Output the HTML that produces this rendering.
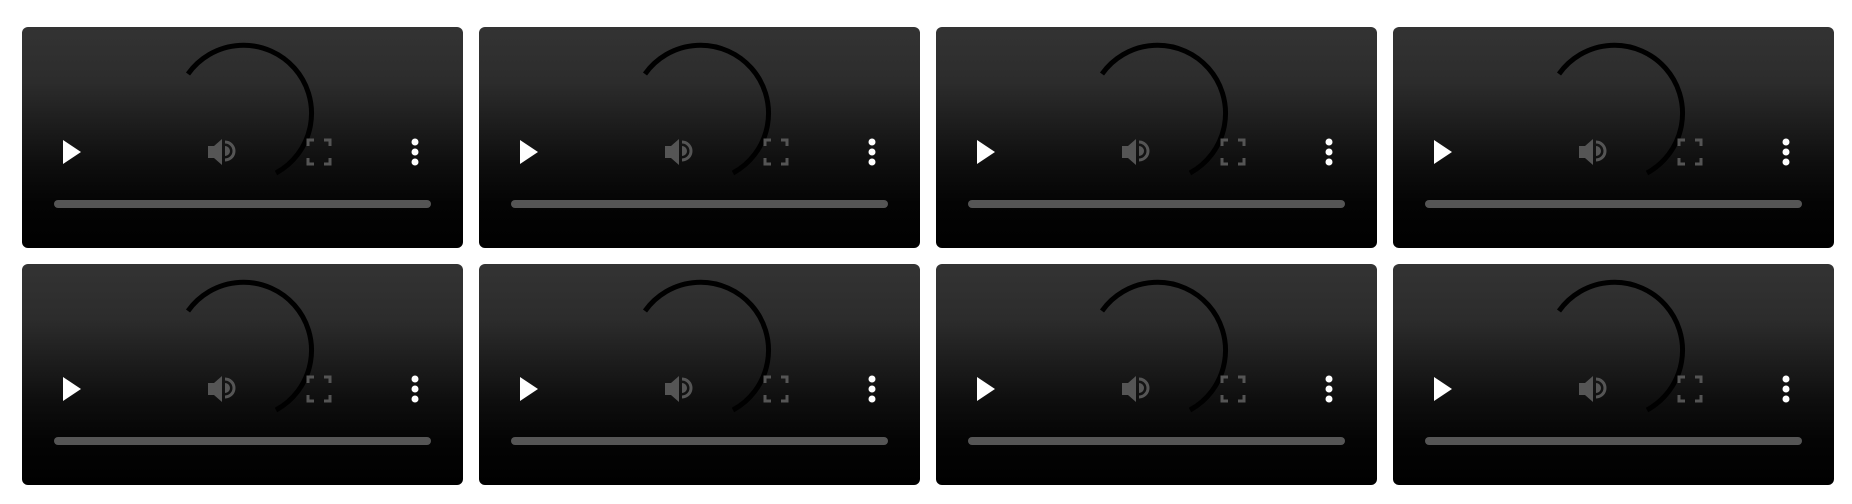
<!DOCTYPE html>
<html><head><style>
html,body{margin:0;padding:0;background:#fff;width:1852px;height:504px;overflow:hidden}
.c{position:absolute;width:441px;height:221px;border-radius:6px;background:linear-gradient(#333 0%,#2c2c2c 25%,#1c1c1c 45%,#0e0e0e 62%,#040404 80%,#000 100%);overflow:hidden}
.c svg{position:absolute;left:0;top:0}
</style></head><body>
<div id="w"></div>
<script>
var xs=[22,479,936,1393],ys=[27,264],h='';
var svg='<svg width="441" height="221" viewBox="0 0 441 221">'+
'<path d="M166 47 A68 68 0 1 1 254 146" fill="none" stroke="#000" stroke-width="5"/>'+
'<polygon points="41,113 59,125 41,137" fill="#fff"/>'+
'<g transform="translate(0,-2)">'+
'<path d="M186 121 h6 l8 -7 v26 l-8 -7 h-6z" fill="#555"/>'+
'<path d="M203 117 a9 9 0 0 1 0 18" fill="none" stroke="#555" stroke-width="3"/>'+
'<path d="M203 121 a5 5 0 0 1 0 10z" fill="#555"/>'+
'<path d="M286 121v-6h6M302 115h6v6M308 133v6h-6M292 139h-6v-6" fill="none" stroke="#555" stroke-width="3"/>'+
'</g>'+
'<circle cx="393" cy="115" r="3.5" fill="#fff"/><circle cx="393" cy="125" r="3.5" fill="#fff"/><circle cx="393" cy="135" r="3.5" fill="#fff"/>'+
'<rect x="32" y="173" width="377" height="8" rx="4" fill="#555"/></svg>';
ys.forEach(function(y){xs.forEach(function(x){h+='<div class="c" style="left:'+x+'px;top:'+y+'px">'+svg+'</div>';});});
document.getElementById('w').innerHTML=h;
</script>
</body></html>
